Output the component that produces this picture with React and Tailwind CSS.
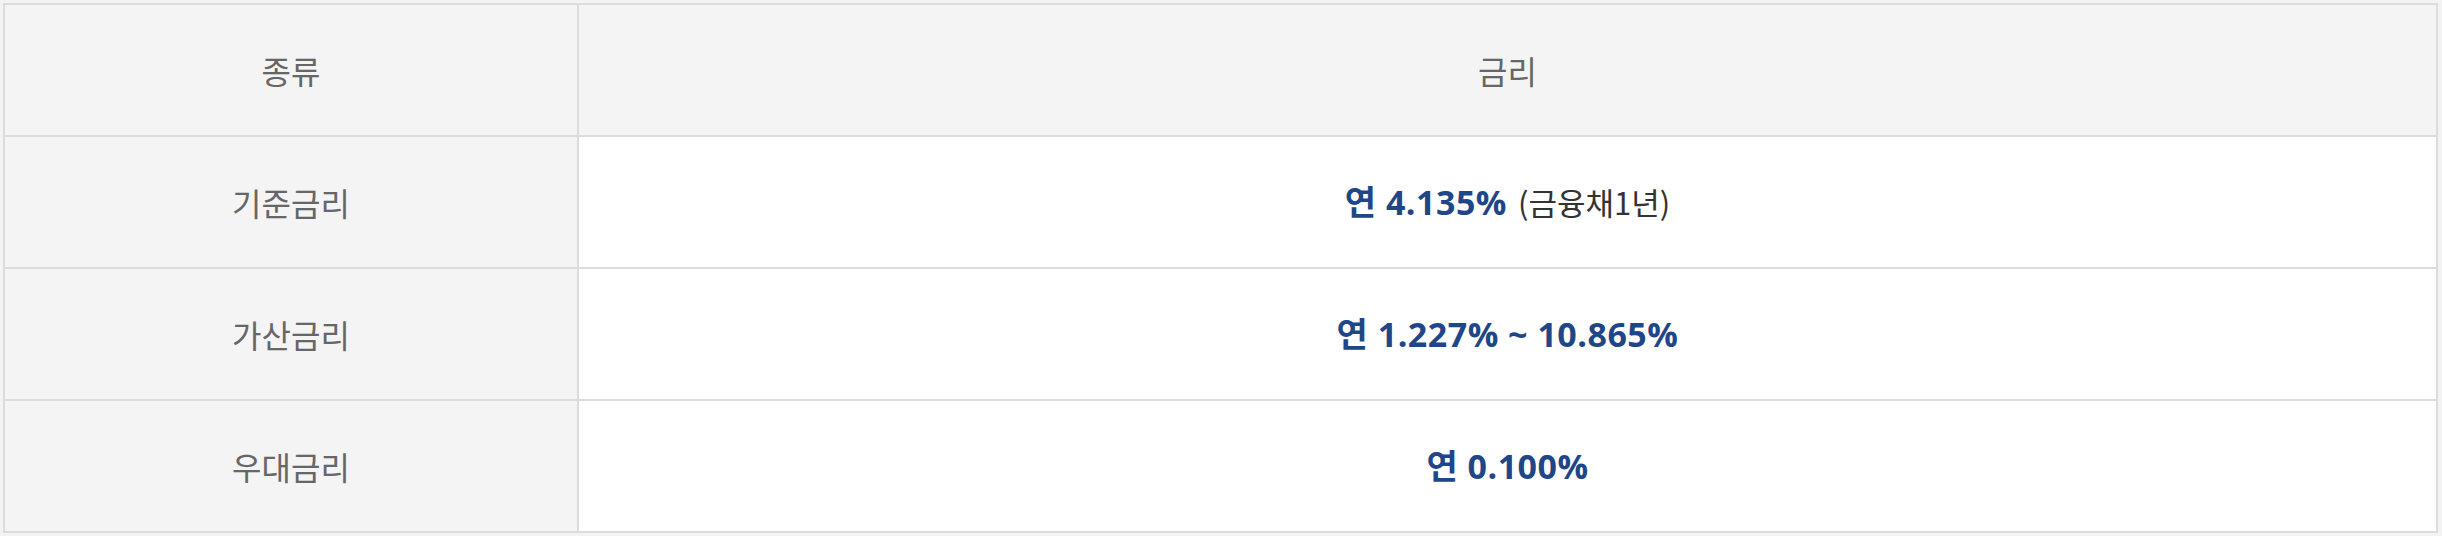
import React from "react";

const rows = [
  { label: "기준금리", rate: "연 4.135%", note: "(금융채1년)" },
  { label: "가산금리", rate: "연 1.227% ~ 10.865%" },
  { label: "우대금리", rate: "연 0.100%" },
];

const App = () => {
  return (
    <div
      className="min-h-screen bg-[#f3f3f3] pt-[3px] pl-[3px] pr-[4px]"
      style={{ fontFamily: '"Noto Sans CJK KR", "Noto Sans", sans-serif' }}
    >
      <div className="border-2 border-[#dcdcdc] bg-white">
        <div className="flex h-[132px] border-b-2 border-[#dcdcdc] bg-[#f4f4f4]">
          <div className="w-[574px] border-r-2 border-[#dcdcdc] flex items-center justify-center text-[32px] text-[#666666]">
            종류
          </div>
          <div className="flex-1 flex items-center justify-center text-[32px] text-[#666666]">
            금리
          </div>
        </div>
        {rows.map((row, i) => (
          <div
            key={row.label}
            className={
              i < rows.length - 1
                ? "flex h-[132px] border-b-2 border-[#dcdcdc]"
                : "flex h-[130px]"
            }
          >
            <div className="w-[574px] border-r-2 border-[#dcdcdc] bg-[#f4f4f4] flex items-center justify-center text-[32px] text-[#666666]">
              {row.label}
            </div>
            <div className="flex-1 flex items-center justify-center">
              <span
                className="font-bold text-[34px] text-[#1f4788] tracking-[0.5px]"
                style={{ fontFamily: '"Open Sans", "Noto Sans CJK KR", sans-serif' }}
              >
                {row.rate}
              </span>
              {row.note && (
                <span className="ml-[11px] text-[31px] text-[#333333]">{row.note}</span>
              )}
            </div>
          </div>
        ))}
      </div>
    </div>
  );
};

export default App;
